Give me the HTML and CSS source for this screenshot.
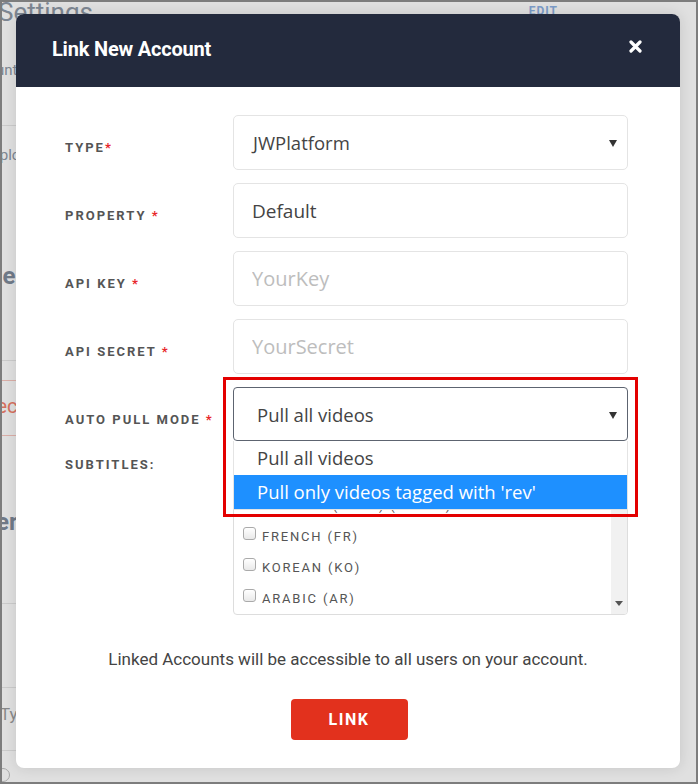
FILE: index.html
```html
<!doctype html>
<html lang="en">
  <head>
    <meta charset="UTF-8" />
    <title>Link New Account</title>
    <link rel="stylesheet" href="styles.css">
  </head>
  <body>
    <div class="frame">
      <!-- page behind the modal -->
      <div class="page">
        <div class="page-head">
          <h2>Settings</h2>
          <span class="edit">EDIT</span>
        </div>
        <div class="page-row r1"><span>Account</span></div>
        <div class="page-row r2">
          <span>Upload</span>
          <b>Profile</b>
          <span>Users</span>
        </div>
        <div class="page-row r3"><span>Connect</span></div>
        <div class="page-row r4"><b>Other</b></div>
        <div class="page-row r5"></div>
        <div class="page-row r6"><span>Type</span></div>
        <div class="page-row r7"><i class="dot"></i></div>
      </div>
      <div class="backdrop"></div>

      <div class="modal">
        <div class="modal-header">
          <h3>Link New Account</h3>
          <svg class="close" width="13" height="13" viewBox="0 0 13 13">
            <path d="M2 2 L11 11 M11 2 L2 11" stroke="#fff" stroke-width="3.2" stroke-linecap="round" />
          </svg>
        </div>

        <form class="modal-body">
          <div class="row">
            <label>Type<span class="req">*</span></label>
            <div class="field select">JWPlatform<span class="caret"></span></div>
          </div>
          <div class="row">
            <label>Property <span class="req">*</span></label>
            <input class="field" type="text" value="Default" />
          </div>
          <div class="row">
            <label>API Key <span class="req">*</span></label>
            <input class="field" type="text" placeholder="YourKey" />
          </div>
          <div class="row">
            <label>API Secret <span class="req">*</span></label>
            <input class="field" type="text" placeholder="YourSecret" />
          </div>
          <div class="row">
            <label>Auto Pull Mode <span class="req">*</span></label>
            <div class="field select focused">Pull all videos<span class="caret"></span></div>
          </div>
          <div class="row row-subs">
            <label>Subtitles:</label>
            <div class="subs">
              <ul>
                <li><input type="checkbox" />English (EN)</li>
                <li><input type="checkbox" />Chinese (Trad) (ZH-TW)</li>
                <li><input type="checkbox" />French (FR)</li>
                <li><input type="checkbox" />Korean (KO)</li>
                <li><input type="checkbox" />Arabic (AR)</li>
              </ul>
              <div class="scrollbar"><span class="arrow"></span></div>
            </div>
          </div>

          <p class="note">Linked Accounts will be accessible to all users on your account.</p>
          <button type="button">Link</button>
        </form>

        <ul class="dropdown">
          <li>Pull all videos</li>
          <li class="active">Pull only videos tagged with 'rev'</li>
        </ul>
        <div class="callout"></div>
      </div>
    </div>
  </body>
</html>
```

FILE: styles.css
```css
* {
  box-sizing: border-box;
}
body {
  margin: 0;
  font-family: Roboto, "Liberation Sans", sans-serif;
}
.frame {
  position: relative;
  width: 698px;
  height: 784px;
  border: 2px solid #7d7d7d;
  background: #fafafa;
  overflow: hidden;
}

/* background page */
.page {
  color: #8c96a3;
  font-size: 15px;
}
.page-head {
  display: flex;
  justify-content: space-between;
  width: 560px;
  margin-left: -4px;
  height: 40px;
}
.page-head h2 {
  margin: -5px 0 0;
  font-size: 26px;
  font-weight: 400;
}
.page-head .edit {
  color: #8aaee0;
  font-size: 12px;
  font-weight: 700;
  letter-spacing: 1px;
  margin-top: 2px;
}
.page-row {
  display: flex;
  flex-direction: column;
  border-bottom: 1px solid #e2e2e2;
  width: 300px;
}
.r1 {
  height: 84px;
  padding-top: 19px;
  margin-left: -40px;
}
.r2 {
  height: 235px;
  padding-top: 20px;
  margin-left: -12px;
}
.r2 b {
  margin: 98px 0 0 -46px;
  font-size: 24px;
  color: #7d8898;
}
.r2 b + span {
  margin: 24px 0 0 -30px;
}
.r3 {
  height: 56px;
  margin-top: 19px;
  border-top: 1px solid #f3c2ba;
  border-bottom-color: #f3c2ba;
  color: #ee7d69;
  padding-top: 13px;
  margin-left: -52px;
  font-size: 20px;
}
.r4 {
  height: 168px;
  padding-top: 72px;
  font-size: 24px;
  color: #7d8898;
  margin-left: -44px;
}
.r5 {
  height: 84px;
}
.r6 {
  height: 63px;
  padding-top: 16px;
  margin-left: -2px;
  color: #999;
  font-size: 17px;
}
.r7 {
  border: none;
  padding: 17px 0 0 0;
}
.dot {
  width: 14px;
  height: 14px;
  border: 1px solid #bbb;
  border-radius: 50%;
  margin-left: -6px;
}

.backdrop {
  position: absolute;
  inset: 0;
  background: rgba(0, 0, 0, 0.1);
}

/* modal */
.modal {
  position: absolute;
  left: 14px;
  top: 12px;
  width: 664px;
  height: 754px;
  background: white;
  border-radius: 8px;
  box-shadow: 0 0 14px rgba(0, 0, 0, 0.12);
}
.modal-header {
  height: 73px;
  background: #232a3d;
  border-radius: 8px 8px 0 0;
  display: flex;
  align-items: center;
  justify-content: space-between;
  padding: 0 38px 0 36px;
}
.modal-header h3 {
  margin: -4px 0 0;
  color: white;
  font-size: 20px;
  font-weight: 700;
  letter-spacing: -0.2px;
}
.close {
  margin-top: -8px;
}
.modal-body {
  padding: 28px 52px 0 49px;
  display: flex;
  flex-direction: column;
}
.row {
  display: flex;
  align-items: center;
  margin-bottom: 13px;
}
.row label {
  width: 168px;
  flex: none;
  text-transform: uppercase;
  font-size: 13px;
  font-weight: 700;
  letter-spacing: 2px;
  color: #555;
  padding-top: 10px;
}
.req {
  color: #e8272a;
}
.field {
  width: 395px;
  height: 55px;
  border: 1px solid #e4e4e4;
  border-radius: 5px;
  padding: 0 18px;
  font-family: "Open Sans", sans-serif;
  font-size: 19px;
  color: #444;
  background: white;
  outline: none;
}
.field::placeholder {
  color: #bdbdbd;
  font-size: 20px;
}
.select {
  display: flex;
  align-items: center;
  justify-content: space-between;
  padding-left: 19px;
  padding-right: 10px;
  font-size: 18.5px;
}
.focused {
  height: 54px;
  border-color: #5d6470;
  border-radius: 4px;
  padding-left: 23px;
}
.caret {
  width: 0;
  height: 0;
  border-left: 4px solid transparent;
  border-right: 4px solid transparent;
  border-top: 7px solid #333;
  margin-top: 2px;
}
.row-subs {
  align-items: flex-start;
}
.row-subs label {
  padding-top: 3px;
}
.subs {
  position: relative;
  width: 395px;
  height: 161px;
  border: 1px solid #ddd;
  border-radius: 4px;
  overflow: hidden;
}
.subs ul {
  list-style: none;
  margin: 0;
  padding: 4px 0 0 8px;
}
.subs li {
  display: flex;
  align-items: center;
  height: 31px;
  font-size: 13px;
  letter-spacing: 1.8px;
  text-transform: uppercase;
  color: #555;
}
.subs input {
  appearance: none;
  width: 13px;
  height: 13px;
  margin: -6px 6px 0 1px;
  border: 1px solid #aaa;
  border-radius: 3px;
  background: linear-gradient(#fff, #e9e9e9);
}
.scrollbar {
  position: absolute;
  right: 0;
  top: 0;
  bottom: 0;
  width: 16px;
  background: #f1f1f1;
}
.arrow {
  position: absolute;
  bottom: 8px;
  left: 4px;
  border-left: 4px solid transparent;
  border-right: 4px solid transparent;
  border-top: 5px solid #555;
}
.note {
  text-align: center;
  font-size: 17px;
  color: #444;
  margin: 21px 0 0 -49px;
  width: 664px;
}
button {
  align-self: center;
  margin: 30px 0 0 -49px;
  position: relative;
  left: 27px;
  width: 117px;
  height: 41px;
  border: none;
  border-radius: 4px;
  background: #e2311d;
  color: white;
  font-family: Roboto, sans-serif;
  font-size: 16px;
  font-weight: 700;
  letter-spacing: 1.5px;
  text-transform: uppercase;
}

/* open dropdown of auto pull mode */
.dropdown {
  position: absolute;
  left: 217px;
  top: 427px;
  width: 395px;
  margin: 0;
  padding: 0;
  list-style: none;
  background: white;
  border: 1px solid #e4e4e4;
  border-top: none;
  font-family: "Open Sans", sans-serif;
  font-size: 18.5px;
  color: #444;
}
.dropdown li {
  height: 34px;
  line-height: 33px;
  padding-left: 23px;
}
.dropdown .active {
  background: #1e90ff;
  color: white;
}
.callout {
  position: absolute;
  left: 207px;
  top: 363px;
  width: 415px;
  height: 140px;
  border: 3px solid #e30000;
}
```
